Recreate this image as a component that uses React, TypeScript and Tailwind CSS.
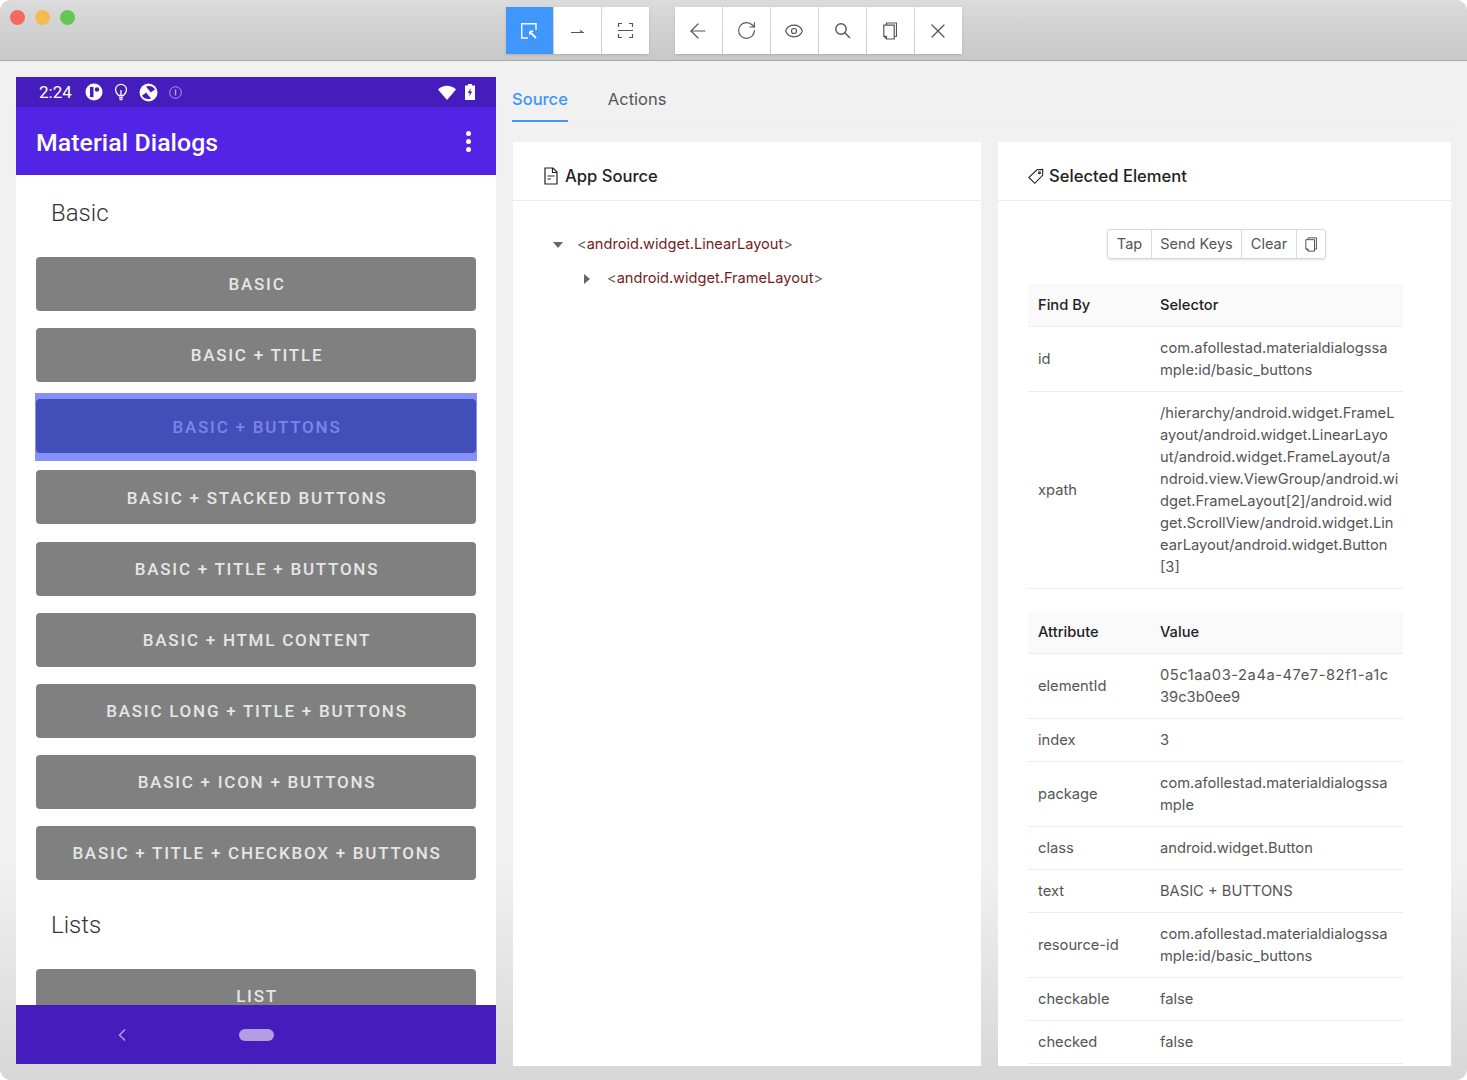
import { ArrowLeft, Eye, RotateCw, X } from "lucide-react";
import type { ReactNode } from "react";

const basicButtons = [
  "BASIC",
  "BASIC + TITLE",
  "BASIC + BUTTONS",
  "BASIC + STACKED BUTTONS",
  "BASIC + TITLE + BUTTONS",
  "BASIC + HTML CONTENT",
  "BASIC LONG + TITLE + BUTTONS",
  "BASIC + ICON + BUTTONS",
  "BASIC + TITLE + CHECKBOX + BUTTONS",
];

interface InfoRow {
  name: string;
  value: string[];
  firstLineClass?: string;
}

const selectorRows: InfoRow[] = [
  { name: "id", value: ["com.afollestad.materialdialogssa", "mple:id/basic_buttons"] },
  {
    name: "xpath",
    value: [
      "/hierarchy/android.widget.FrameL",
      "ayout/android.widget.LinearLayo",
      "ut/android.widget.FrameLayout/a",
      "ndroid.view.ViewGroup/android.wi",
      "dget.FrameLayout[2]/android.wid",
      "get.ScrollView/android.widget.Lin",
      "earLayout/android.widget.Button",
      "[3]",
    ],
  },
];

const attributeRows: InfoRow[] = [
  {
    name: "elementId",
    value: ["05c1aa03-2a4a-47e7-82f1-a1c", "39c3b0ee9"],
    firstLineClass: "tracking-[0.55px]",
  },
  { name: "index", value: ["3"] },
  { name: "package", value: ["com.afollestad.materialdialogssa", "mple"] },
  { name: "class", value: ["android.widget.Button"] },
  { name: "text", value: ["BASIC + BUTTONS"] },
  { name: "resource-id", value: ["com.afollestad.materialdialogssa", "mple:id/basic_buttons"] },
  { name: "checkable", value: ["false"] },
  { name: "checked", value: ["false"] },
];

function SelectIcon() {
  return (
    <svg width="18" height="18" viewBox="0 0 18 18" fill="none" stroke="currentColor" strokeWidth="1.4">
      <path d="M8 16H1.700V1.700H16V8" />
      <path d="M10 10l6 6" strokeWidth="1.800" />
      <path d="M10 9.200h3.200M9.800 9.400v3" strokeWidth="1.600" />
    </svg>
  );
}

function SwipeIcon() {
  return (
    <svg width="14" height="14" viewBox="0 0 14 14" fill="none" stroke="currentColor" strokeWidth="1.200">
      <path d="M1 8.500h12L10 6.500" />
    </svg>
  );
}

function ScanIcon() {
  return (
    <svg width="17" height="17" viewBox="0 0 17 17" fill="none" stroke="currentColor" strokeWidth="1.200">
      <path d="M1.500 5V1.500H5M12 1.500h3.500V5M1.500 12v3.500H5M12 15.500h3.500V12M1 8.500h15" />
    </svg>
  );
}

function SearchIcon() {
  return (
    <svg width="17" height="17" viewBox="0 0 17 17" fill="none" stroke="currentColor" strokeWidth="1.400">
      <circle cx="7" cy="7" r="5.200" />
      <path d="M10.800 10.800 16 16" />
    </svg>
  );
}

function CopyIcon({ width = 14, height = 18 }: { width?: number; height?: number }) {
  return (
    <svg width={width} height={height} viewBox="0 0 14 18" fill="none" stroke="currentColor" strokeWidth="1.200">
      <path d="M3.500 3V1h10v13.500h-2" />
      <path d="M.800 3.200h10.400V17H3.500L.800 14.300z" />
      <path d="M.800 14.300h2.700V17" />
    </svg>
  );
}

function FileIcon() {
  return (
    <svg width="16" height="18" viewBox="0 0 16 18" fill="none" stroke="#222" strokeWidth="1.200">
      <path d="M2 1h8l4 4v12H2z" />
      <path d="M9.500 1v4.500H14M4.500 9h7M4.500 12h3.500" />
    </svg>
  );
}

function TagIcon() {
  return (
    <svg width="16" height="17" viewBox="0 0 17 17" fill="none" stroke="#222" strokeWidth="1.200">
      <path d="M1 9.500 9.500 1.300l6.200-.3-.2 6.300-8.300 8.400z" />
      <circle cx="12.200" cy="4.500" r="1" />
    </svg>
  );
}

function ToolButton({ children, active = false }: { children: ReactNode; active?: boolean }) {
  return (
    <div
      className={
        active
          ? "flex h-[47px] w-[47px] items-center justify-center bg-[#3f96fb] text-white"
          : "flex h-[47px] w-[47px] items-center justify-center bg-white text-[#555]"
      }
    >
      {children}
    </div>
  );
}

function StatusBar() {
  return (
    <div className="flex h-[30px] shrink-0 items-center bg-[#461dbd] pl-[23px] pr-[21px] text-white">
      <span className="w-[33px] text-[17px] leading-none">2:24</span>
      <div className="ml-[13px] flex items-center">
        <svg width="18" height="18" viewBox="0 0 18 18">
          <circle cx="9" cy="9" r="8.500" fill="white" />
          <rect x="5" y="4" width="3.500" height="10" fill="#461dbd" />
          <circle cx="12" cy="6.500" r="2.200" fill="#461dbd" />
        </svg>
        <svg className="ml-[11px]" width="14" height="18" viewBox="0 0 14 18" fill="none" stroke="white" strokeWidth="1.300">
          <path d="M4.500 12.500C3 11 1.500 9.500 1.500 6.800a5.500 5.500 0 0 1 11 0c0 2.700-1.500 4.200-3 5.700z" />
          <path d="M5 14.500h4M5.500 16.500h3M7 12V7" />
        </svg>
        <svg className="ml-[11px]" width="19" height="19" viewBox="0 0 19 19">
          <circle cx="9.500" cy="9.500" r="9" fill="white" />
          <path d="M7 3.500c4-1.500 8 .5 9 3l-4.500 3C11 7.500 9 6.500 7 3.500zM12 15.500c-4 1.500-8-.5-9-3l4.500-3C8 11.500 10 12.500 12 15.500z" fill="#461dbd" />
        </svg>
        <svg className="ml-[11px]" width="13" height="13" viewBox="0 0 13 13" fill="none" stroke="#b39ddb" strokeWidth="1">
          <circle cx="6.500" cy="6.500" r="5.800" />
          <path d="M6.500 3.500v6" strokeWidth="1.500" />
        </svg>
      </div>
      <div className="ml-auto flex items-center gap-[9px]">
        <svg width="18" height="15" viewBox="0 0 18 15">
          <path d="M0 4.500C5-.5 13-.5 18 4.500L9 15z" fill="white" />
        </svg>
        <svg width="10" height="16" viewBox="0 0 10 16">
          <path d="M3 0h4v1.500h3V16H0V1.500h3z" fill="white" />
          <path d="M5.800 4 2.800 9h2l-.6 3.500L7.200 7.500h-2z" fill="#461dbd" />
        </svg>
      </div>
    </div>
  );
}

function PhoneButton({ label, selected = false }: { label: string; selected?: boolean }) {
  return (
    <div className="relative flex h-[54px] shrink-0 items-center justify-center rounded-[4px] bg-[#808080] pl-[2px] pt-[2px] text-[17px] font-medium tracking-[1.75px] text-[#e6e6e6]">
      {label}
      {selected && <div className="absolute -inset-x-px -top-[6px] -bottom-[8px] bg-[#001af5]/[0.48]" />}
    </div>
  );
}

function Phone() {
  return (
    <div className="flex h-[987px] w-[480px] shrink-0 flex-col bg-white font-['Roboto',sans-serif]">
      <StatusBar />
      <div className="flex h-[68px] shrink-0 items-center justify-between bg-[#5225e6] pl-5 pr-[25px] text-white">
        <span className="pt-1 text-[24.800px] font-medium leading-none tracking-[0.1px]">Material Dialogs</span>
        <div className="flex flex-col gap-[3px]">
          <span className="h-[5px] w-[5px] rounded-full bg-white" />
          <span className="h-[5px] w-[5px] rounded-full bg-white" />
          <span className="h-[5px] w-[5px] rounded-full bg-white" />
        </div>
      </div>
      <div className="min-h-0 flex-1 overflow-hidden px-5">
        <div className="flex h-[82px] items-start pl-[15px] pt-[23px] text-[24px] font-light leading-[30px] text-[#333]">
          Basic
        </div>
        <div className="flex flex-col gap-[17.125px]">
          {basicButtons.map((label) => (
            <PhoneButton key={label} label={label} selected={label === "BASIC + BUTTONS"} />
          ))}
        </div>
        <div className="flex h-[89px] items-start pl-[15px] pt-[30px] text-[24px] font-light leading-[30px] text-[#333]">
          Lists
        </div>
        <PhoneButton label="LIST" />
      </div>
      <div className="flex h-[59px] shrink-0 items-center bg-[#451dbd] pl-[101px]">
        <svg width="10" height="14" viewBox="0 0 10 14" fill="none" stroke="#b39ddb" strokeWidth="1.500">
          <path d="M8 1.500 2.500 7 8 12.500" />
        </svg>
        <div className="ml-[112px] h-[12px] w-[35px] rounded-full bg-[#b39de2]" />
      </div>
    </div>
  );
}

function TreeLine({ name, open, indent }: { name: string; open: boolean; indent: string }) {
  return (
    <div className={`flex h-[34px] items-center ${indent}`}>
      <div className="flex w-[25px] items-center">
        {open ? (
          <span className="ml-px h-0 w-0 border-x-[5px] border-t-[6px] border-x-transparent border-t-[#666]" />
        ) : (
          <span className="ml-[2px] h-0 w-0 border-y-[5px] border-l-[6px] border-y-transparent border-l-[#666]" />
        )}
      </div>
      <span className="text-[14.600px] text-[#666]">
        &lt;<span className="text-[#741c1c]">{name}</span>&gt;
      </span>
    </div>
  );
}

function CardHead({ icon, title, gap }: { icon: ReactNode; title: string; gap: string }) {
  return (
    <div className={`flex h-[59px] shrink-0 items-center border-b border-[#ececec] pl-[30px] pt-[10px] text-[16.600px] font-medium text-[#222] ${gap}`}>
      {icon}
      {title}
    </div>
  );
}

function InfoTable({ heads, rows }: { heads: [string, string]; rows: InfoRow[] }) {
  return (
    <table className="w-[375px] table-fixed border-collapse text-[14.700px] leading-[22px] text-[#555]">
      <thead>
        <tr className="border-b border-[#ececec] bg-[#fafafa] text-left font-medium text-[#222]">
          <th className="w-[122px] py-[10px] pl-[10px] font-medium">{heads[0]}</th>
          <th className="py-[10px] pl-[10px] font-medium">{heads[1]}</th>
        </tr>
      </thead>
      <tbody>
        {rows.map((row) => (
          <tr key={row.name} className="border-b border-[#ececec]">
            <td className="py-[10px] pl-[10px]">{row.name}</td>
            <td className="whitespace-nowrap py-[10px] pl-[10px]">
              {row.value.map((line, index) => (
                <span key={line} className={index === 0 ? `block ${row.firstLineClass ?? ""}` : "block"}>
                  {line}
                </span>
              ))}
            </td>
          </tr>
        ))}
      </tbody>
    </table>
  );
}

export default function App() {
  return (
    <div className="h-[1080px] w-[1467px] overflow-hidden bg-white font-['Inter',sans-serif]">
      <div className="flex h-full flex-col overflow-hidden rounded-[11px] bg-gradient-to-b from-[#f1f1f1] from-80% to-[#d7d7d7]">
        <header className="relative flex h-[61px] shrink-0 justify-center gap-[26px] border-b border-[#a9a9a9] bg-gradient-to-b from-[#dbdbdb] to-[#c8c8c8] pt-[7px]">
          <div className="absolute left-[10px] top-[10px] flex gap-[10px]">
            <span className="h-[15px] w-[15px] rounded-full bg-[#f1695f]" />
            <span className="h-[15px] w-[15px] rounded-full bg-[#f6bb4e]" />
            <span className="h-[15px] w-[15px] rounded-full bg-[#62c755]" />
          </div>
          <div className="flex h-[47px] gap-px shadow-sm">
            <ToolButton active>
              <SelectIcon />
            </ToolButton>
            <ToolButton>
              <SwipeIcon />
            </ToolButton>
            <ToolButton>
              <ScanIcon />
            </ToolButton>
          </div>
          <div className="flex h-[47px] gap-px shadow-sm">
            <ToolButton>
              <ArrowLeft size={24} strokeWidth={1.200} />
            </ToolButton>
            <ToolButton>
              <RotateCw size={21} strokeWidth={1.300} />
            </ToolButton>
            <ToolButton>
              <Eye size={20} strokeWidth={1.400} />
            </ToolButton>
            <ToolButton>
              <SearchIcon />
            </ToolButton>
            <ToolButton>
              <CopyIcon />
            </ToolButton>
            <ToolButton>
              <X size={24} strokeWidth={1.200} />
            </ToolButton>
          </div>
        </header>
        <main className="flex min-h-0 flex-1 items-start pl-4 pr-4 pt-4">
          <Phone />
          <section className="ml-4 flex h-[989px] min-w-0 flex-1 flex-col">
            <div className="flex h-[45px] shrink-0 gap-[40px] border-b border-[#ececec] text-[16.500px]">
              <div className="flex h-[45px] items-center border-b-2 border-[#3f96fb] pt-[2px] font-medium text-[#3f96fb]">
                Source
              </div>
              <div className="flex h-[45px] items-center pb-px text-[#555]">Actions</div>
            </div>
            <div className="ml-px mt-5 flex min-h-0 flex-1 gap-[17px]">
              <div className="flex h-[924px] w-[468px] shrink-0 flex-col bg-white">
                <CardHead icon={<FileIcon />} title="App Source" gap="gap-[6px]" />
                <div className="pl-[39px] pt-[27px]">
                  <TreeLine name="android.widget.LinearLayout" open indent="" />
                  <TreeLine name="android.widget.FrameLayout" open={false} indent="pl-[30px]" />
                </div>
              </div>
              <div className="flex h-[924px] w-[453px] shrink-0 flex-col overflow-hidden bg-white">
                <CardHead icon={<TagIcon />} title="Selected Element" gap="gap-[5px]" />
                <div className="flex justify-center pr-[16px] pt-[28px]">
                  <div className="flex h-[30px] rounded-[3px] border border-[#d9d9d9] text-[14.500px] text-[#555] shadow-sm">
                    <span className="flex w-[43px] items-center justify-center">Tap</span>
                    <span className="flex w-[90px] items-center justify-center border-l border-[#d9d9d9]">Send Keys</span>
                    <span className="flex w-[55px] items-center justify-center border-l border-[#d9d9d9]">Clear</span>
                    <span className="flex w-[29px] items-center justify-center border-l border-[#d9d9d9]">
                      <CopyIcon width={12} height={15} />
                    </span>
                  </div>
                </div>
                <div className="ml-[30px] mt-[25px] flex flex-col gap-[22px]">
                  <InfoTable heads={["Find By", "Selector"]} rows={selectorRows} />
                  <InfoTable heads={["Attribute", "Value"]} rows={attributeRows} />
                </div>
              </div>
            </div>
          </section>
        </main>
      </div>
    </div>
  );
}
